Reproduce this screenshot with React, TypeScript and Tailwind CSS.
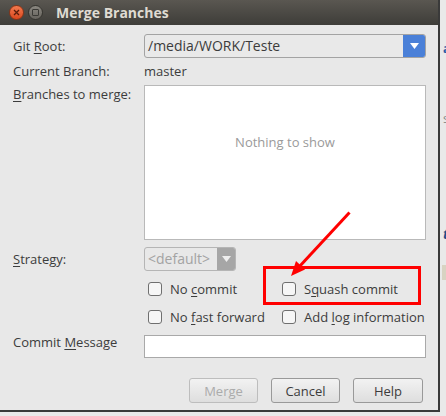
import React from "react";

const font = { fontFamily: '"Open Sans", "Noto Sans", sans-serif' };

function U({ children }: { children: React.ReactNode }) {
  return <span className="underline underline-offset-2 decoration-1">{children}</span>;
}

function Check({ children }: { children: React.ReactNode }) {
  return (
    <div className="flex items-center h-[20px] whitespace-nowrap">
      <div className="w-[14px] h-[14px] shrink-0 rounded-[3px] border border-[#6f6f6f] bg-[#f6f6f6] ml-[4px]" />
      <span className="ml-[8px] text-[#3c3c3c]">{children}</span>
    </div>
  );
}

function Btn({ children, disabled }: { children: React.ReactNode; disabled?: boolean }) {
  return (
    <div
      className={
        "h-[25px] rounded-[3px] border flex items-center justify-center bg-gradient-to-b from-[#f2f2f2] to-[#dedede] " +
        (disabled ? "border-[#bdbdbd] text-[#ababab]" : "border-[#999999] text-[#3c3c3c]")
      }
    >
      {children}
    </div>
  );
}

export default function App() {
  return (
    <div className="relative w-[446px] h-[416px] bg-[#e9e9e9] overflow-hidden" style={font}>
      {/* background app peeking at the right */}
      <div className="absolute left-[443px] top-[42px] text-[12px] leading-[14px] text-[#2a5aa8] font-bold">a</div>
      <div className="absolute left-[443px] top-[110px] text-[13px] leading-[16px] text-[#888]">s</div>
      <div className="absolute left-[443px] top-[226px] text-[14px] leading-[16px] text-[#1d4d8a] italic font-bold">t</div>
      <div className="absolute left-[442px] top-[265px] w-[4px] h-[15px] bg-[#d8d3c2]" />

      {/* dialog window */}
      <div className="absolute left-0 top-0 w-[440px] h-[412px] bg-[#e8e8e8] border-r-2 border-b-2 border-[#3a3a3a] flex flex-col text-[13px] leading-[16px]">
        {/* title bar */}
        <div className="h-[25px] shrink-0 bg-gradient-to-b from-[#5a5751] to-[#3e3d39] flex items-center">
          <div className="ml-[9px] w-[15px] h-[15px] rounded-full bg-gradient-to-b from-[#f47a4e] to-[#d9471c] border border-[#8a3316] flex items-center justify-center">
            <svg width="7" height="7" viewBox="0 0 7 7">
              <path d="M1 1 L6 6 M6 1 L1 6" stroke="#5a1c0a" strokeWidth="1.3" />
            </svg>
          </div>
          <div className="ml-[4px] w-[15px] h-[15px] rounded-full bg-gradient-to-b from-[#8a8780] to-[#66635d] border border-[#35342f] flex items-center justify-center">
            <div className="w-[7px] h-[7px] border border-[#3a3935] rounded-[1px]" />
          </div>
          <div className="ml-[13px] text-[14px] font-bold text-[#dfdbd2]">Merge Branches</div>
        </div>

        {/* form */}
        <div className="pl-[13px] pr-[12px] flex flex-col">
          <div className="flex items-center mt-[9px] h-[24px]">
            <div className="w-[131px] text-[#3c3c3c]">
              Git <U>R</U>oot:
            </div>
            <div className="flex-1 h-[24px] flex rounded-[3px] border border-[#a3a3a3] bg-[#e9e9e9] overflow-hidden">
              <div className="flex-1 pl-[3px] flex items-center text-[14px] text-[#3c3c3c]">/media/WORK/Teste</div>
              <div className="w-[23px] -my-px -mr-px bg-[#4a80d8] rounded-r-[3px] flex items-center justify-center">
                <svg width="9" height="6" viewBox="0 0 9 6">
                  <path d="M0 0 H9 L4.5 6 Z" fill="#ffffff" />
                </svg>
              </div>
            </div>
          </div>

          <div className="flex items-center h-[26px]">
            <div className="w-[131px] text-[#3c3c3c]">Current Branch:</div>
            <div className="text-[#3c3c3c]">master</div>
          </div>

          <div className="flex mt-px">
            <div className="w-[131px] text-[#3c3c3c] pt-[1px]">
              <U>B</U>ranches to merge:
            </div>
            <div className="flex-1 h-[155px] bg-white border border-[#b9b9b9] flex items-center justify-center pb-[42px] text-[#9a9a9a]">
              Nothing to show
            </div>
          </div>

          <div className="flex items-center mt-[7px] h-[24px]">
            <div className="w-[131px] text-[#3c3c3c]">
              <U>S</U>trategy:
            </div>
            <div className="w-[92px] h-[24px] flex rounded-[3px] border border-[#b5b5b5] overflow-hidden">
              <div className="flex-1 pl-[3px] flex items-center text-[14px] text-[#a3a3a3]">&lt;default&gt;</div>
              <div className="w-[19px] -my-px -mr-px bg-[#a6a6a6] rounded-r-[3px] flex items-center justify-center">
                <svg width="9" height="6" viewBox="0 0 9 6">
                  <path d="M0 0 H9 L4.5 6 Z" fill="#eeeeee" />
                </svg>
              </div>
            </div>
          </div>

          <div className="ml-[131px] mt-[8px] grid grid-cols-[134px_1fr] gap-y-[8px]">
            <Check>
              No <U>c</U>ommit
            </Check>
            <Check>
              S<U>q</U>uash commit
            </Check>
            <Check>
              No <U>f</U>ast forward
            </Check>
            <Check>
              Add <U>l</U>og information
            </Check>
          </div>

          <div className="flex mt-[8px]">
            <div className="w-[131px] text-[#3c3c3c] -mt-[1px]">
              Commit <U>M</U>essage
            </div>
            <div className="flex-1 h-[23px] bg-white border border-[#a9a9a9]" />
          </div>

          <div className="flex justify-end mt-[20px] gap-[13px] mr-[3px]">
            <div className="w-[69px]">
              <Btn disabled>Merge</Btn>
            </div>
            <div className="w-[69px]">
              <Btn>Cancel</Btn>
            </div>
            <div className="w-[70px]">
              <Btn>Help</Btn>
            </div>
          </div>
        </div>
      </div>

      {/* red annotation: box and arrow */}
      <div className="absolute left-[263px] top-[266px] w-[158px] h-[39px] border-[3px] border-[#ff0000]" />
      <svg className="absolute left-0 top-0" width="446" height="416" viewBox="0 0 446 416">
        <line x1="349.5" y1="212.5" x2="299" y2="267" stroke="#ff0000" strokeWidth="3" />
        <path d="M291 276 L305 269.5 L296 261 Z" fill="#ff0000" />
      </svg>
    </div>
  );
}
